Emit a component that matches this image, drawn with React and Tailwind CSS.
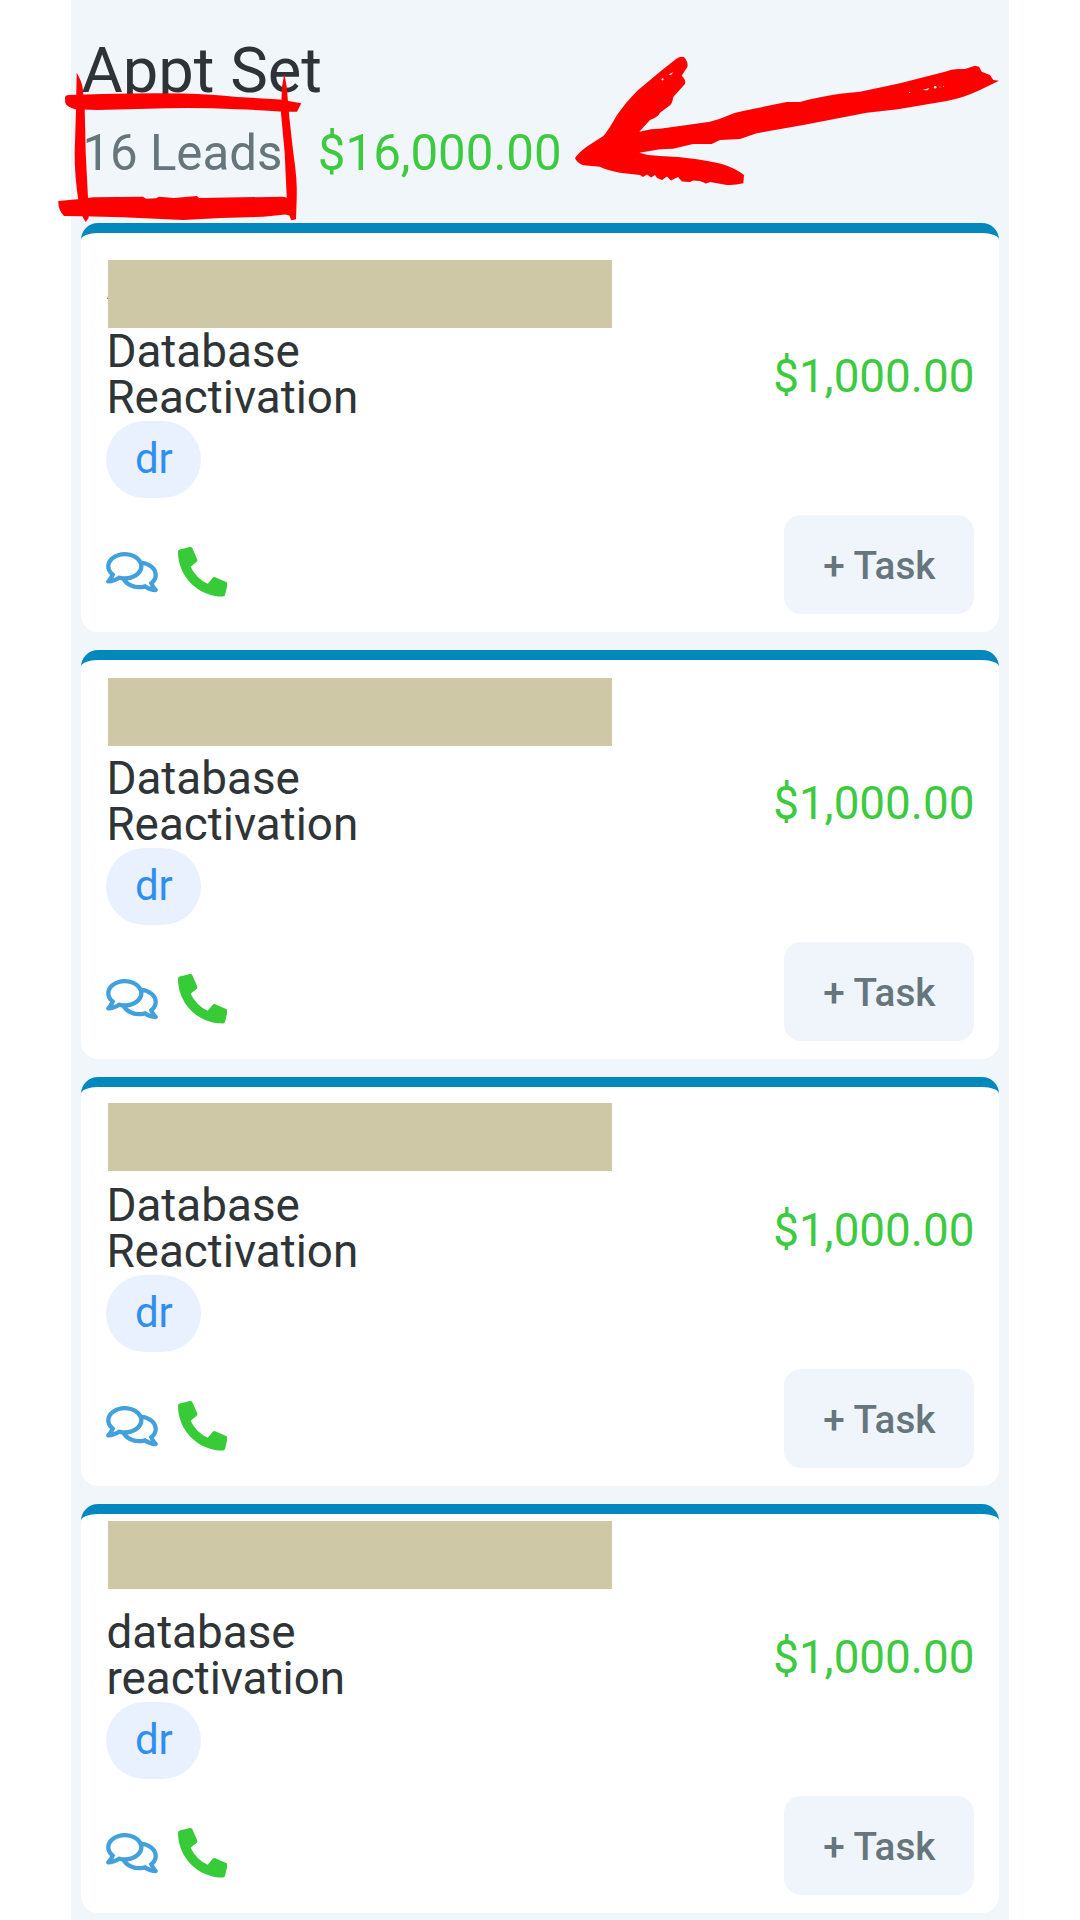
import React from 'react';
import { FaRegComments, FaPhoneAlt } from "react-icons/fa";

const leads = [
    { id: 1, initial: "A", title: ["Database", "Reactivation"], tag: "dr", amount: "$1,000.00", barTop: 27 },
    { id: 2, initial: "", title: ["Database", "Reactivation"], tag: "dr", amount: "$1,000.00", barTop: 18.5 },
    { id: 3, initial: "", title: ["Database", "Reactivation"], tag: "dr", amount: "$1,000.00", barTop: 16 },
    { id: 4, initial: "", title: ["database", "reactivation"], tag: "dr", amount: "$1,000.00", barTop: 7 },
];

const LeadCard = ({ lead }) => {
    return (
        <div className="h-[409px] bg-white rounded-[17px] border-t-[10.5px] border-[#0288bd] pl-[25px] pr-[25px]">
            <div className="relative h-[95px]">
                {lead.initial && (
                    <span className="absolute left-0 top-[27px] text-[46px] leading-[46px] text-[#2f3437]">{lead.initial}</span>
                )}
                <div
                    className="absolute left-[2px] w-[503.5px] h-[68px] bg-[#cfc8a6]"
                    style={{ top: lead.barTop }}
                />
            </div>
            <div className="flex justify-between">
                <div>
                    <p className="pt-px text-[45.8px] leading-[46px] text-[#2f3437]">
                        {lead.title[0]}<br />{lead.title[1]}
                    </p>
                    <span className="flex items-center justify-center w-[95px] h-[77px] rounded-full bg-[#eaf1fe] pb-[2px] text-[42px] text-[#2f8ff0]">
                        {lead.tag}
                    </span>
                </div>
                <span className="mt-[26px] text-[45.8px] leading-[46px] text-[#3dca41]">{lead.amount}</span>
            </div>
            <div className="flex justify-between items-center mt-[17px]">
                <div className="flex items-center gap-[19.5px] mt-[16px]">
                    <FaRegComments className="w-[52px] h-[46px] text-[#42a0dc]" />
                    <FaPhoneAlt className="w-[49.5px] h-[49.5px] text-[#37cb38]" />
                </div>
                <button className="w-[190px] h-[99px] rounded-[17px] bg-[#eff5fb] pt-[5px] text-[38.7px] font-medium text-[#66767c]">
                    + Task
                </button>
            </div>
        </div>
    )
}

// hand drawn box around the lead count and the arrow to the total
const Marker = () => {
    return (
        <svg className="absolute left-0 top-0 w-[1080px] h-[240px]" viewBox="0 0 1080 240" fill="#ff0000">
            <path d="M65 98 Q65 95 69 95 L103 94 Q145 93 183 93.5 Q212 94 237 97 L280 99.5 L301.3 103.3 L297 111.7 L283 111.7 Q260 110 237 109.3 Q200 107.5 167 108.3 L97 110 L75 109.3 Q67 107 65.3 103 Z" />
            <path d="M76.7 72.7 Q82 82 82.7 88 L84.7 110 L85.7 153 L88 198 L88.6 218 L85.7 222 L82.7 217 L78.3 200 Q74.5 175 74.7 153 L76 110 Z" />
            <path d="M284.3 73.3 L286.7 86.7 L289.3 117 L293.3 153 Q297.5 180 296.7 198 L296 219.3 L291.3 220.3 L289.5 216 L286.7 196.7 L284.7 153 L281 113 L282 86.7 Z" />
            <path d="M58.3 201 L80 199 L93.3 197.3 L143 196.8 L146 198.8 L156 198.2 L159 196.7 L174 198 L197 196 L199 198 L283.3 196.7 L296 200 L295 216.7 L285 214.5 L263.3 216.7 L221 218 L183 220 L123 217.3 L83 216.2 L64 216 Q58 210 58.3 201 Z" />
            <path d="M575 158.3 Q578 153 587 146.5 L603.3 136 Q608 131 617 115 Q626 102 637 91 L660 71.7 L676 59 Q682 55 685 58 Q689 64 687 67.5 L681.7 75.7 Q687 81 684.5 84.5 L673.3 97 Q672 105 669 106 L660 112.7 Q658 117 650 120 L639.3 131.7 L651 129.3 L660 128.7 L710 121.7 Q719 119.5 727 116 Q734 112.5 743 111 L786.7 102 L800 102 Q818 97 840 93.8 L860 91.7 L900 83.3 L946 71.5 Q951 69 958 69 L965 69 L975 65.7 L979 66.7 L981.7 71.7 L990 75 L993.3 80 L999 80.7 L980 90 Q963 98 946.7 101 L906.7 107.7 L898 109.3 L866.7 112.7 L803.3 125 L756.7 133.3 L740 139 L720 140 L711.7 144 L693 144 L673 148.7 L660 149.3 L639.3 152.7 L648 155 L660 156 Q678 156.5 697 159.3 Q716 162 727 165.7 Q738 170 744 175 L743.3 183.3 Q732 186 724 184.5 L710 182 L706 183.5 L700 181 L693 180.5 L690 182 L682 181.5 L678 177 L671 180.5 L667 176.5 L662 180 L657 178 L655 175 L651 177.5 L647 174.5 L643 177 L640 175 L620 172.7 Q605 169.5 600 166.7 L583.3 165.3 Q577 163 575 158.3 Z" />
            <g fill="#f0f6fa">
                <path d="M668.5 74.5 L673.5 72 L671 75 Z" />
                <circle cx="662.5" cy="79.3" r="1.1" />
                <path d="M922.5 90 L929.5 88 L927.5 90.3 Z" />
                <circle cx="935.2" cy="87.2" r="1.3" />
                <circle cx="940" cy="87" r="0.5" />
                <circle cx="943.6" cy="86.3" r="0.5" />
                <circle cx="909.7" cy="92.6" r="0.5" />
            </g>
        </svg>
    )
}

const App = () => {
    return (
        <div className="relative w-[1080px] h-[1920px] overflow-hidden bg-white font-['Roboto',sans-serif]">
            <div className="ml-[71px] w-[938px] h-full bg-[#f0f6fa] pl-[10.4px] pr-[9.6px]">
                <div className="h-[222.5px] pt-[32px]">
                    <h1 className="text-[63.3px] leading-[76px] text-[#2d3337]">Appt Set</h1>
                    <div className="flex mt-[15px] pl-px gap-[35.5px] text-[49.2px] leading-[60px]">
                        <span className="text-[#66767c]">16 Leads</span>
                        <span className="text-[#3dca41]">$16,000.00</span>
                    </div>
                </div>
                <div className="flex flex-col gap-[18px]">
                    {leads.map((lead) => (
                        <LeadCard key={lead.id} lead={lead} />
                    ))}
                </div>
            </div>
            <Marker />
        </div>
    )
}

export default App;
